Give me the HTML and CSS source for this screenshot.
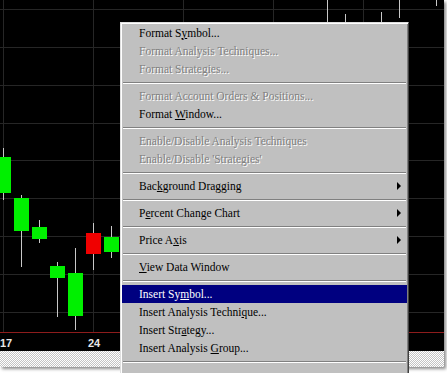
FILE: index.html
```html
<!DOCTYPE html>
<html>
<head>
<meta charset="utf-8">
<link rel="stylesheet" href="styles.css">
</head>
<body>
<div class="screen">
  <svg class="chart" width="444" height="351" viewBox="0 0 444 351">
    <rect x="0" y="0" width="444" height="351" fill="#000"/>
    <g stroke="#262626" stroke-width="1">
      <line x1="0" y1="9.5" x2="444" y2="9.5"/>
      <line x1="0" y1="47.5" x2="444" y2="47.5"/>
      <line x1="0" y1="85.5" x2="444" y2="85.5"/>
      <line x1="0" y1="123.5" x2="444" y2="123.5"/>
      <line x1="0" y1="160.5" x2="444" y2="160.5"/>
      <line x1="0" y1="198.5" x2="444" y2="198.5"/>
      <line x1="0" y1="236.5" x2="444" y2="236.5"/>
      <line x1="0" y1="274.5" x2="444" y2="274.5"/>
      <line x1="0" y1="312.5" x2="444" y2="312.5"/>
      <line x1="3.5" y1="0" x2="3.5" y2="332"/>
      <line x1="93.5" y1="0" x2="93.5" y2="332"/>
      <line x1="183.5" y1="0" x2="183.5" y2="332"/>
      <line x1="273.5" y1="0" x2="273.5" y2="332"/>
      <line x1="363.5" y1="0" x2="363.5" y2="332"/>
    </g>
    <line x1="0" y1="332.5" x2="444" y2="332.5" stroke="#8e1c1c" stroke-width="1"/>
    <g stroke="#c8c8c8" stroke-width="1">
      <line x1="3.5" y1="148" x2="3.5" y2="200"/>
      <line x1="21.5" y1="195" x2="21.5" y2="267"/>
      <line x1="39.5" y1="220" x2="39.5" y2="243"/>
      <line x1="57.5" y1="262" x2="57.5" y2="317"/>
      <line x1="75.5" y1="248" x2="75.5" y2="330"/>
      <line x1="93.5" y1="223" x2="93.5" y2="270"/>
      <line x1="111.5" y1="226" x2="111.5" y2="258"/>
      <line x1="327.5" y1="0" x2="327.5" y2="22"/>
      <line x1="345.5" y1="14" x2="345.5" y2="22"/>
      <line x1="381.5" y1="12" x2="381.5" y2="22"/>
      <line x1="399.5" y1="0" x2="399.5" y2="18"/>
      <line x1="436.5" y1="0" x2="436.5" y2="6"/>
    </g>
    <g fill="#00f000">
      <rect x="-4" y="157" width="15" height="36"/>
      <rect x="14" y="198" width="15" height="33"/>
      <rect x="32" y="227" width="15" height="12"/>
      <rect x="50" y="266" width="15" height="12"/>
      <rect x="68" y="273" width="15" height="43"/>
      <rect x="104" y="237" width="15" height="15"/>
    </g>
    <rect x="86" y="233" width="15" height="21" fill="#f00000"/>
    <g class="axis-label">
      <text x="0" y="347">17</text>
      <text x="88" y="347">24</text>
    </g>
  </svg>
  <div class="hatch"></div>
</div>

<div class="menu">
  <div class="item"><span>Format S<u>y</u>mbol...</span></div>
  <div class="item disabled"><span>Format Analysis Techniques...</span></div>
  <div class="item disabled"><span>Format Strategies...</span></div>
  <div class="sep"></div>
  <div class="item disabled"><span>Format Account Orders &amp; Positions...</span></div>
  <div class="item"><span>Format <u>W</u>indow...</span></div>
  <div class="sep"></div>
  <div class="item disabled"><span>Enable/Disable Analysis Techniques</span></div>
  <div class="item disabled"><span>Enable/Disable 'Strategies'</span></div>
  <div class="sep"></div>
  <div class="item sub"><span>Bac<u>k</u>ground Dragging</span><span class="arrow"></span></div>
  <div class="sep"></div>
  <div class="item sub"><span>P<u>e</u>rcent Change Chart</span><span class="arrow"></span></div>
  <div class="sep"></div>
  <div class="item sub"><span>Price A<u>x</u>is</span><span class="arrow"></span></div>
  <div class="sep"></div>
  <div class="item"><span><u>V</u>iew Data Window</span></div>
  <div class="sep"></div>
  <div class="item active"><span>Insert Sy<u>m</u>bol...</span></div>
  <div class="item"><span>Insert Analysis Techni<u>q</u>ue...</span></div>
  <div class="item"><span>Insert Str<u>a</u>tegy...</span></div>
  <div class="item"><span>Insert Analysis <u>G</u>roup...</span></div>
  <div class="sep"></div>
</div>
</body>
</html>
```
FILE: styles.css
```css
html, body {
  margin: 0;
  padding: 0;
  background: #ffffff;
  overflow: hidden;
}

body {
  width: 447px;
  height: 373px;
  position: relative;
}

.screen {
  width: 444px;
  height: 367px;
  display: flex;
  flex-direction: column;
  box-shadow: 2px 2px 3px rgba(0, 0, 0, 0.45);
}

.chart {
  display: block;
  flex: none;
}

.axis-label text {
  font-family: "Liberation Sans", Arial, sans-serif;
  font-size: 11px;
  font-weight: bold;
  fill: #e8e8e8;
}

.hatch {
  flex: 1;
  background: repeating-conic-gradient(#ffffff 0 25%, #c4c4c4 0 50%);
  background-size: 2px 2px;
}

.menu {
  position: absolute;
  left: 120px;
  top: 22px;
  bottom: 0;
  width: 289px;
  box-sizing: border-box;
  overflow: hidden;
  background: #c0c0c0;
  border: 1px solid;
  border-bottom: 0;
  border-color: #dfdfdf #404040 #404040 #dfdfdf;
  padding: 1px 1px 0;
  box-shadow: inset 1px 1px 0 #ffffff, inset -1px 0 0 #808080;
  font-family: "Liberation Serif", "Times New Roman", serif;
  font-size: 11.5px;
  color: #000;
}

.item {
  height: 18px;
  line-height: 19px;
  padding-left: 17px;
  padding-right: 6px;
  white-space: nowrap;
  display: flex;
  align-items: center;
  justify-content: space-between;
}

.item u {
  text-decoration: underline;
  text-underline-offset: 1px;
}

.item.disabled {
  color: #808080;
  text-shadow: 1px 1px 0 #ffffff;
}

.item.active {
  background: #000080;
  color: #ffffff;
}

.arrow {
  width: 0;
  height: 0;
  border-top: 4px solid transparent;
  border-bottom: 4px solid transparent;
  border-left: 4px solid #000;
}

.sep {
  height: 0;
  margin: 4px 1px 3px;
  border-top: 1px solid #808080;
  border-bottom: 1px solid #ffffff;
}
```
